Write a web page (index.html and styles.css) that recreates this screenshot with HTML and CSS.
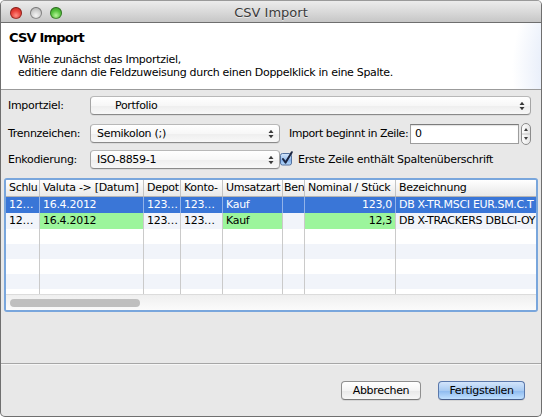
FILE: index.html
```html
<!DOCTYPE html>
<html lang="de">
<head>
<meta charset="utf-8">
<title>CSV Import</title>
<link rel="stylesheet" href="styles.css">
</head>
<body>
<div class="window">
  <div class="titlebar">
    <div class="lights"><span class="light red"></span><span class="light grey"></span><span class="light green"></span></div>
    <div class="title">CSV Import</div>
    <div></div>
  </div>
  <div class="header">
    <div class="h1">CSV Import</div>
    <div class="desc">Wähle zunächst das Importziel,<br>editiere dann die Feldzuweisung durch einen Doppelklick in eine Spalte.</div>
  </div>
  <div class="content">
    <div class="form">
      <div class="lbl">Importziel:</div>
      <div class="popup wide"><span class="ptext indent">Portfolio</span><svg class="arr" width="6" height="10" viewBox="0 0 6 10"><path d="M0.5 4 L3 0.8 L5.5 4Z M0.5 6 L3 9.2 L5.5 6Z" fill="#3a3a3a"/></svg></div>
      <div class="lbl">Trennzeichen:</div>
      <div class="popup"><span class="ptext">Semikolon (;)</span><svg class="arr" width="6" height="10" viewBox="0 0 6 10"><path d="M0.5 4 L3 0.8 L5.5 4Z M0.5 6 L3 9.2 L5.5 6Z" fill="#3a3a3a"/></svg></div>
      <div class="right">
        <span class="rlabel">Import beginnt in Zeile:</span>
        <div class="field">0</div>
        <svg class="stepper" width="10" height="22" viewBox="0 0 10 22">
          <defs><linearGradient id="sg" x1="0" y1="0" x2="1" y2="0"><stop offset="0" stop-color="#ffffff"/><stop offset="1" stop-color="#e4e4e4"/></linearGradient></defs>
          <rect x="0.5" y="0.5" width="9" height="21" rx="4.5" fill="url(#sg)" stroke="#8c8c8c"/>
          <line x1="1" y1="11" x2="9" y2="11" stroke="#c4c4c4"/>
          <path d="M3 8 L5 5 L7 8Z M3 14 L5 17 L7 14Z" fill="#404040"/>
        </svg>
      </div>
      <div class="lbl">Enkodierung:</div>
      <div class="popup"><span class="ptext">ISO-8859-1</span><svg class="arr" width="6" height="10" viewBox="0 0 6 10"><path d="M0.5 4 L3 0.8 L5.5 4Z M0.5 6 L3 9.2 L5.5 6Z" fill="#3a3a3a"/></svg></div>
      <div class="right check">
        <svg class="cb" width="14" height="15" viewBox="0 0 14 15">
          <defs><linearGradient id="cg" x1="0" y1="0" x2="0" y2="1"><stop offset="0" stop-color="#d5e6fa"/><stop offset="0.5" stop-color="#9fc3ef"/><stop offset="0.55" stop-color="#80afea"/><stop offset="1" stop-color="#b9dafb"/></linearGradient></defs>
          <rect x="0.5" y="2.5" width="11" height="11.5" rx="2" fill="url(#cg)" stroke="#52719f"/>
          <path d="M3 8 L5.6 11.6 L11.8 1.2" fill="none" stroke="#1b2540" stroke-width="2" stroke-linecap="round" stroke-linejoin="round"/>
        </svg>
        <span>Erste Zeile enthält Spaltenüberschrift</span>
      </div>
    </div>

    <div class="table">
      <div class="tr th">
        <div class="td">Schlu</div><div class="td">Valuta -&gt; [Datum]</div><div class="td">Depot</div><div class="td">Konto-</div><div class="td">Umsatzart</div><div class="td tight">Ben</div><div class="td">Nominal / Stück</div><div class="td">Bezeichnung</div>
      </div>
      <div class="tr sel">
        <div class="td">12…</div><div class="td">16.4.2012</div><div class="td">123…</div><div class="td">123…</div><div class="td">Kauf</div><div class="td"></div><div class="td num">123,0</div><div class="td">DB X-TR.MSCI EUR.SM.C.T</div>
      </div>
      <div class="tr alt">
        <div class="td">12…</div><div class="td ok">16.4.2012</div><div class="td">123…</div><div class="td">123…</div><div class="td ok">Kauf</div><div class="td"></div><div class="td num ok">12,3</div><div class="td">DB X-TRACKERS DBLCI-OY</div>
      </div>
      <div class="tr e"><div class="td"></div><div class="td"></div><div class="td"></div><div class="td"></div><div class="td"></div><div class="td"></div><div class="td"></div><div class="td"></div></div>
      <div class="tr e alt"><div class="td"></div><div class="td"></div><div class="td"></div><div class="td"></div><div class="td"></div><div class="td"></div><div class="td"></div><div class="td"></div></div>
      <div class="tr e"><div class="td"></div><div class="td"></div><div class="td"></div><div class="td"></div><div class="td"></div><div class="td"></div><div class="td"></div><div class="td"></div></div>
      <div class="tr e alt"><div class="td"></div><div class="td"></div><div class="td"></div><div class="td"></div><div class="td"></div><div class="td"></div><div class="td"></div><div class="td"></div></div>
      <div class="tr filler"><div class="td"></div><div class="td"></div><div class="td"></div><div class="td"></div><div class="td"></div><div class="td"></div><div class="td"></div><div class="td"></div></div>
      <div class="hscroll"><div class="thumb"></div></div>
    </div>
  </div>
  <div class="footer">
    <button class="btn">Abbrechen</button>
    <button class="btn primary">Fertigstellen</button>
  </div>
</div>
</body>
</html>
```

FILE: styles.css
```css
* { box-sizing: border-box; margin: 0; padding: 0; }
html, body { background: #ffffff; }
body {
  font-family: "DejaVu Sans", "Liberation Sans", sans-serif;
  font-size: 11px;
  letter-spacing: -0.3px;
  color: #000;
}
.window {
  width: 542px;
  height: 417px;
  display: flex;
  flex-direction: column;
  border: 1px solid #6f6f6f;
  border-top-color: #9a9a9a;
  border-radius: 5px;
  background: #e8e8e8;
  overflow: hidden;
}
.titlebar {
  height: 22px;
  flex: none;
  display: grid;
  grid-template-columns: 1fr auto 1fr;
  align-items: center;
  background: linear-gradient(#ececec, #dadada 50%, #c6c6c6);
  border-bottom: 1px solid #6e6e6e;
}
.lights { display: flex; gap: 8px; padding-left: 9px; padding-top: 2px; }
.light {
  width: 12px; height: 12px; border-radius: 50%;
  box-shadow: inset 0 0 0 1px rgba(0,0,0,0.35);
}
.red { background: radial-gradient(circle at 50% 70%, #ff8f84 0%, #e9423a 45%, #b51e17 100%); }
.grey { background: radial-gradient(circle at 50% 70%, #f4f4f4 0%, #d2d2d2 45%, #9c9c9c 100%); }
.green { background: radial-gradient(circle at 50% 70%, #b7f59b 0%, #58c43f 45%, #2e8a1f 100%); }
.title {
  font-size: 13px;
  letter-spacing: 0;
  color: #3b3b3b;
  text-shadow: 0 1px 0 rgba(255,255,255,0.6);
  padding-top: 1px;
}
.header {
  height: 67px;
  flex: none;
  border-bottom: 1px solid #9b9b9b;
  padding: 7px 0 0 8px;
  background:
    radial-gradient(ellipse 60px 110px at 108% 78%, rgba(255,255,255,0.95) 0%, rgba(255,255,255,0.95) 45%, rgba(255,255,255,0) 62%),
    radial-gradient(ellipse 120px 150px at 112% 70%, rgba(196,210,238,0.75) 0%, rgba(214,225,246,0.5) 55%, rgba(255,255,255,0) 78%),
    #ffffff;
}
.h1 {
  font-weight: bold;
  font-size: 13px;
  line-height: 16px;
  letter-spacing: -0.8px;
}
.desc {
  margin-top: 7px;
  padding-left: 9px;
  line-height: 13px;
}
.content {
  flex: 1;
  padding: 6px 3px 0 3px;
}
.form {
  display: grid;
  grid-template-columns: 82px 190px 1fr;
  grid-template-rows: 28px 26px 19px;
  padding: 0 7px 0 4px;
}
.lbl { line-height: 19px; height: 19px; white-space: nowrap; }
.popup {
  height: 19px;
  display: flex;
  align-items: center;
  border: 1px solid #a5a5a5;
  border-top-color: #b8b8b8;
  border-bottom-color: #8a8a8a;
  border-radius: 4px;
  background: linear-gradient(#ffffff, #f7f7f7 50%, #eeeeee 51%, #f8f8f8);
  box-shadow: 0 1px 0 rgba(0,0,0,0.06);
  padding: 0 5px 0 6px;
}
.popup.wide { grid-column: 2 / 4; }
.ptext { flex: 1; line-height: 17px; white-space: nowrap; }
.ptext.indent { padding-left: 18px; }
.arr { flex: none; }
.right {
  display: flex;
  align-items: center;
  height: 19px;
  padding-left: 9px;
  white-space: nowrap;
  min-width: 0;
}
.rlabel { flex: none; letter-spacing: -0.45px; }
.field {
  flex: none;
  margin-left: auto;
  width: 109px;
  height: 20px;
  background: #fff;
  border: 1px solid #9d9d9d;
  border-top-color: #7c7c7c;
  box-shadow: inset 0 1px 1px rgba(0,0,0,0.12);
  padding: 0 4px;
  line-height: 18px;
}
.stepper { margin-left: 2px; flex: none; }
.check { padding-left: 0; }
.cb { flex: none; margin-top: -2px; }
.check span { margin-left: 4px; }
.table {
  margin-top: 9px;
  height: 134px;
  border: 2px solid #79a6dc;
  border-radius: 3px;
  background: #ffffff;
  overflow: hidden;
  display: flex;
  flex-direction: column;
}
.tr {
  display: grid;
  grid-template-columns: 34px 104px 37px 42px 60px 22px 91px 240px;
  height: 15px;
  flex: none;
  width: 630px;
}
.th {
  height: 17px;
  background: linear-gradient(#ffffff, #f3f3f3 50%, #e9e9e9);
  border-bottom: 1px solid #b5b5b5;
}
.td {
  border-right: 1px solid #cacaca;
  padding: 0 2px 0 3px;
  white-space: nowrap;
  overflow: hidden;
  line-height: 15px;
}
.td.tight { padding: 0 0 0 1px; }
.th .td { line-height: 16px; border-right-color: #c4c4c4; }
.sel, .tr.alt:not(.e) { height: 16px; }
.sel .td, .tr.alt:not(.e) .td { line-height: 16px; }
.sel { background: #3a76d7; color: #fff; }
.sel .td { border-right-color: rgba(255,255,255,0.45); }
.alt { background: #f1f4fa; }
.ok { background: #9cf59c; }
.num { text-align: right; padding-right: 3px; }
.filler { height: 5px; }
.hscroll {
  height: 16px;
  flex: none;
  border-top: 1px solid #dcdcdc;
  background: linear-gradient(#efefef, #fbfbfb);
  padding: 4px 0 0 4px;
}
.thumb {
  width: 130px;
  height: 8px;
  border-radius: 4px;
  background: #bfbfbf;
}
.footer {
  height: 53px;
  flex: none;
  border-top: 1px solid #a6a6a6;
  box-shadow: inset 0 1px 0 #f6f6f6;
  display: flex;
  justify-content: flex-end;
  align-items: flex-start;
  gap: 17px;
  padding: 17px 16px 0 0;
}
.btn {
  font: inherit;
  letter-spacing: -0.3px;
  color: #000;
  height: 19px;
  width: 80px;
  border: 1px solid #8f8f8f;
  border-bottom-color: #7a7a7a;
  border-radius: 4px;
  background: linear-gradient(#ffffff, #f4f4f4 50%, #e8e8e8 51%, #f7f7f7);
  box-shadow: 0 1px 0 rgba(0,0,0,0.08);
}
.btn.primary {
  width: 87px;
  border-color: #5a78ab;
  border-bottom-color: #485f8a;
  background: linear-gradient(#d3e5fb, #a9cbf2 50%, #8cb9ee 51%, #c2e1ff);
}
```
